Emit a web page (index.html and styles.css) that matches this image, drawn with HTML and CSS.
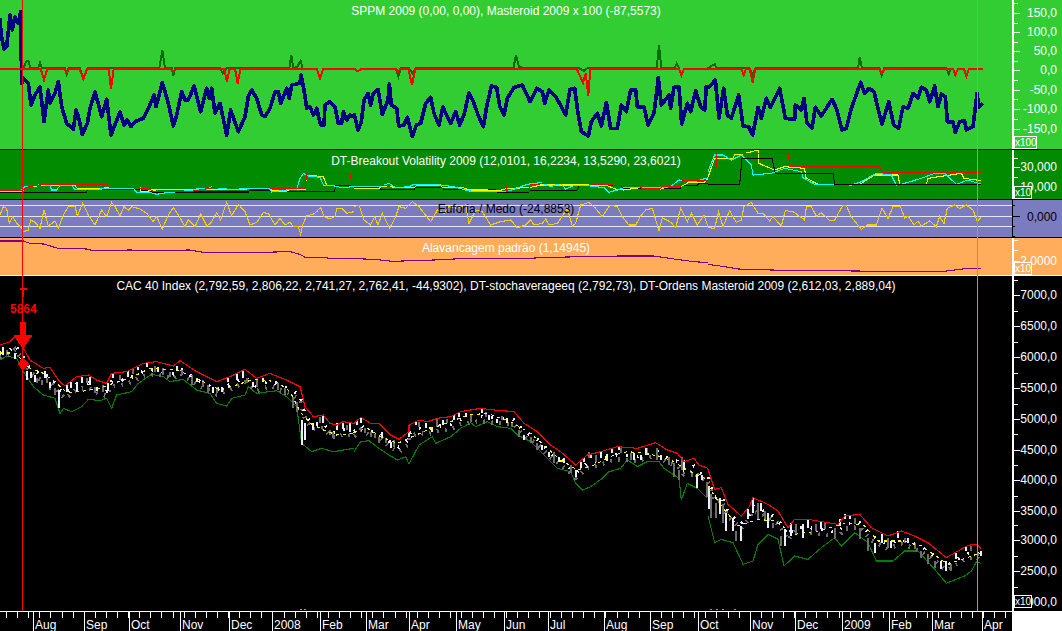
FILE: index.html
```html
<!DOCTYPE html>
<html lang="en">
<head>
    <meta charset="UTF-8">
    <title>CAC 40 Index</title>
    <link rel="stylesheet" href="styles.css">
</head>
<body>
<div class="chart">
    <div class="cursor cursor-red"></div>
    <div class="cursor cursor-orange"></div>

    <!-- SPPM / Masteroid -->
    <div class="panel panel-sppm">
        <div class="plot">
            <svg viewBox="0 0 3036 447" width="1012" height="149">
                <g>
                    <polyline class="ln-dgreen" points="70,205 78,185 85,183 92,205 114,205 120,187 126,205 195,205 200,222 205,205 240,205 250,235 262,205 478,205 487,150 495,205 515,205 520,228 525,205 660,205 668,220 680,205 868,205 874,165 880,205 892,200 902,182 908,205"/>
                    <polyline class="ln-blue" points="0,55 3,100 12,148 20,140 30,45 37,90 45,50 55,70 62,35 65,250 70,235 85,250 93,315 105,285 120,260 132,365 145,270 150,310 165,280 175,245 185,320 200,370 220,388 228,330 235,350 247,403 262,370 270,325 285,275 305,350 320,298 333,405 360,335 372,375 382,360 393,380 405,365 430,355 445,325 462,285 468,320 487,248 505,310 520,378 530,345 545,275 555,300 565,300 582,258 602,335 620,265 628,295 635,265 645,340 660,310 680,405 692,330 715,395 735,350 745,290 755,270 770,295 785,345 795,350 810,325 825,275 835,275 842,310 860,265 868,295 875,255 900,250 903,225 912,270 920,325 930,320 940,345 950,325 962,375 972,375 975,315 988,305 1005,320 1015,370 1025,370 1030,335 1040,360 1050,345 1062,350"/>
                    <polyline class="ln-red2" points="0,206 122,206 132,240 142,206 192,206 200,218 208,206 238,206 250,237 262,206 326,206 333,268 341,206 513,206 520,215 528,206 672,206 681,245 689,206 705,206 713,250 722,206 950,206 960,235 970,206 1062,206"/>
                </g>
                <g transform="translate(1062 0)">
                    <polyline class="ln-dgreen" points="125,205 133,230 140,205 165,205 175,220 185,205 478,205 486,165 495,200 510,205 675,205 690,212 700,205 908,205 915,135 922,205 962,205 968,190 975,205"/>
                    <polyline class="ln-blue" points="0,340 12,390 22,365 30,300 42,280 50,315 58,280 72,268 85,343 102,300 106,252 112,315 128,325 134,378 150,375 160,352 175,410 187,375 200,370 215,310 230,292 240,340 255,375 267,320 275,340 290,370 305,335 317,375 330,345 345,278 360,310 372,345 388,380 398,320 412,258 428,262 437,318 450,345 460,295 480,262 505,255 528,305 548,265 565,275 572,310 585,270 605,290 625,325 635,345 648,268 662,265 672,340 682,395 703,408 712,365 730,340 742,378 757,307 770,385 790,385 802,315 817,335 830,270 845,270 850,320 870,320 882,375 900,340 913,233 922,315 945,285 950,325 960,262 975,260 983,372 1000,310 1010,335 1025,272 1040,320 1052,330 1057,260 1062,265"/>
                    <polyline class="ln-red2" points="0,206 12,214 22,206 125,206 132,215 140,206 163,206 174,255 184,206 668,206 687,248 695,220 703,287 709,206 975,206 982,226 990,206 1062,206"/>
                </g>
                <g transform="translate(2124 0)">
                    <polyline class="ln-dgreen" points="0,205 10,198 20,192 26,205 125,205 134,225 142,205 450,205 455,172 462,205 515,205 521,226 528,205 715,205 722,222 730,205"/>
                    <polyline class="ln-blue" points="0,265 22,240 33,355 47,265 58,345 70,355 92,285 105,378 122,380 134,405 150,322 160,355 175,295 187,322 215,265 232,355 260,358 262,315 280,330 288,295 297,370 312,385 322,322 340,348 372,298 385,325 402,390 415,385 430,325 458,247 470,280 483,265 498,275 510,325 522,373 542,305 557,375 572,385 585,320 600,325 615,280 630,295 640,262 655,270 665,305 680,258 690,320 700,282 712,290 718,365 735,365 742,397 755,365 770,362 775,390 795,380 807,280 813,322 825,310"/>
                    <polyline class="ln-red2" points="0,206 100,206 107,225 114,206 125,206 134,247 142,206 512,206 521,220 530,206 735,206 742,225 750,206 768,206 775,230 783,206 825,206"/>
                </g>
            </svg>
            <div class="title title-sppm">SPPM 2009 (0,00, 0,00), Masteroid 2009 x 100 (-87,5573)</div>
        </div>
        <div class="axis">
            <svg viewBox="0 0 50 149" width="50" height="149">
                <path class="tick" d="M0 3H6M0 13H8M0 23H6M0 32H8M0 42H6M0 51H8M0 61H6M0 70H8M0 80H6M0 90H8M0 99H6M0 109H8M0 119H6M0 129H8M0 139H6"/>
                <text class="val" x="45" y="17">150,0</text>
                <text class="val" x="45" y="36">100,0</text>
                <text class="val" x="45" y="55">50,0</text>
                <text class="val" x="45" y="74">0,0</text>
                <text class="val" x="45" y="94">-50,0</text>
                <text class="val" x="45" y="113">-100,0</text>
                <text class="val" x="45" y="133">-150,0</text>
            </svg>
            <div class="scale scale-wide">x100</div>
        </div>
    </div>

    <!-- Breakout volatility -->
    <div class="panel panel-vol">
        <div class="plot">
            <svg viewBox="0 15 3036 147" width="1012" height="49">
                <g>
                    <polyline class="ln-black" points="0,143 258,143 265,133 420,133 425,137 450,137 455,141 745,141 750,135 808,135 812,138 1003,139 1008,122 1062,122"/>
                    <polyline class="ln-yellow" points="0,140 65,140 75,132 85,125 120,122 225,122 232,130 290,130 340,128 420,128 422,140 440,140 455,135 660,133 740,133 750,127 808,127 815,137 860,139 868,134 915,134 920,90 970,95 980,121 1005,121"/>
                    <polyline class="ln-cyan" points="65,135 75,125 100,123 125,118 150,122 155,135 170,135 180,122 215,122 225,133 285,133 340,130 400,130 410,142 450,142 470,148 485,145 575,136 590,132 620,132 635,126 660,130 700,134 740,130 808,130 815,141 860,135 890,133 900,100 910,85 925,93 960,97 970,120 1000,122 1025,128 1062,125"/>
                    <polyline class="ln-red" points="0,136 65,136 90,124 120,120 150,118 320,118 328,127 418,127 424,132 450,132 458,139 575,139 640,128 808,128 812,131 915,131 920,85 1050,85 1056,122 1062,122"/>
                </g>
                <g transform="translate(1062 0)">
                    <polyline class="ln-black" points="0,127 78,127 80,133 180,133 185,127 265,127 270,133 425,133 430,141 525,141 530,137 668,137 675,122 800,122 808,130 978,130 982,122 1030,122 1035,115 1062,115"/>
                    <polyline class="ln-yellow" points="0,130 75,130 80,125 105,122 120,128 180,128 190,120 260,120 265,127 325,127 345,135 400,135 410,138 432,138 460,130 525,128 560,120 700,120 760,122 785,132 808,135 858,128 920,132 940,125 980,125 1005,112 1050,112 1062,100"/>
                    <polyline class="ln-cyan" points="0,125 75,125 105,115 125,128 165,125 180,118 240,118 300,125 345,138 395,140 430,140 465,138 520,118 560,113 590,125 620,115 635,132 660,122 700,122 750,128 765,142 790,135 810,128 920,128 950,125 975,105 1020,110 1062,98"/>
                    <polyline class="ln-red" points="0,122 105,122 110,115 455,115 458,139 525,139 528,120 575,115 710,115 715,119 775,119 780,121 858,121 863,132 918,132 925,125 980,125 985,106 1062,106"/>
                </g>
                <g transform="translate(2124 0)">
                    <polyline class="ln-yellow" points="0,97 20,40 75,40 80,28 100,28 150,15 152,55 200,75 230,65 290,70 293,98 330,118 455,118 500,90 570,90 575,118 655,118 660,100 760,85 768,100 820,107"/>
                    <polyline class="ln-cyan" points="0,80 20,30 45,30 70,45 100,30 130,60 135,90 190,85 230,70 280,80 285,98 320,118 430,120 460,110 505,85 550,90 565,120 580,118 640,100 680,85 710,85 745,118 780,105 820,118"/>
                    <polyline class="ln-black" points="0,118 95,118 102,40 192,40 202,85 375,85 380,118 820,118"/>
                    <polyline class="ln-red" points="0,97 22,97 27,25 240,25 247,64 515,64 522,83 820,83"/>
                </g>
            </svg>
            <div class="title title-vol">DT-Breakout Volatility 2009 (12,0101, 16,2234, 13,5290, 23,6021)</div>
        </div>
        <div class="axis">
            <svg viewBox="0 0 50 49" width="50" height="49">
                <path class="tick" d="M0 8H6M0 17H8M0 27H6M0 37H8M0 47H6"/>
                <text class="val" x="45" y="21">30,000</text>
                <text class="val" x="45" y="41">10,000</text>
            </svg>
            <div class="scale">x10</div>
        </div>
    </div>

    <!-- Euforia / Medo -->
    <div class="panel panel-mood">
        <div class="plot">
            <svg viewBox="0 165 3036 111" width="1012" height="37">
                <path class="ln-band" d="M0 181H3036M0 214H3036M0 244H3036"/>
                <polyline class="ln-gold" points="0,210 10,185 20,190 28,235 38,215 50,235 65,250 70,260 85,255 92,225 105,232 120,250 132,195 145,243 165,228 175,250 190,210 205,185 225,183 232,213 248,175 265,210 285,240 305,195 320,215 335,172 345,185 360,212 372,185 385,195 395,185 420,192 440,205 460,230 470,215 487,252 505,210 520,187 535,210 555,245 565,225 585,245 602,207 620,243 632,235 650,203 662,225 680,172 695,212 715,178 735,200 750,240 770,232 790,203 805,205 825,240 840,220 855,240 870,232 880,245 895,245 902,268 908,240 920,212 940,208 950,200 962,187 972,215 990,222 1005,215 1010,192 1025,190 1040,205 1062,200"/>
                <g transform="translate(1062 0)">
                    <polyline class="ln-gold" points="0,185 15,180 30,225 50,240 62,215 72,240 85,205 107,250 125,215 135,185 155,190 175,170 195,185 230,230 250,195 270,205 285,185 310,190 335,180 345,235 365,195 385,200 410,240 440,230 470,225 490,248 515,240 530,225 540,240 565,235 575,222 585,240 610,235 640,190 655,243 665,235 680,180 705,172 725,190 745,215 768,180 790,185 805,215 825,240 845,240 860,213 875,195 895,190 915,258 925,218 950,232 965,248 980,190 1000,230 1012,205 1030,240 1050,210 1062,245"/>
                </g>
                <g transform="translate(2124 0)">
                    <polyline class="ln-gold" points="0,248 20,250 32,200 45,245 65,197 85,232 100,225 108,185 130,172 150,205 165,205 185,228 195,215 220,243 232,197 255,200 290,225 295,185 310,185 325,213 340,203 365,227 380,225 405,180 415,182 430,215 460,253 478,240 505,240 522,190 540,220 555,185 577,183 590,220 600,213 618,240 630,228 640,243 665,228 685,245 695,215 708,235 718,190 740,180 755,190 775,180 795,195 808,230 820,215"/>
                </g>
            </svg>
            <div class="title title-mood">Euforia / Medo (-24,8853)</div>
        </div>
        <div class="axis">
            <svg viewBox="0 0 50 37" width="50" height="37">
                <path class="tick tick-dark" d="M0 5H3M0 16H8M0 26H3M0 36H3"/>
                <text class="val val-dark" x="45" y="21">0,000</text>
            </svg>
        </div>
    </div>

    <!-- Alavancagem -->
    <div class="panel panel-lev">
        <div class="plot">
            <svg viewBox="0 279 3036 111" width="1012" height="37">
                <polyline class="ln-purple" points="0,288 70,288 90,295 130,297 175,310 260,312 280,317 390,315 450,317 570,315 610,322 680,323 780,322 870,320 900,328 915,337 980,337 985,341 1062,341"/>
                <polyline class="ln-purple" transform="translate(1062 0)" points="0,341 60,343 115,349 240,345 340,340 520,340 590,337 800,333 900,333 960,342 1020,350 1062,353"/>
                <polyline class="ln-purple" transform="translate(2124 0)" points="0,358 50,365 90,372 190,375 290,377 450,378 500,380 700,380 780,370 820,370"/>
            </svg>
            <div class="title title-lev">Alavancagem padrão (1,14945)</div>
        </div>
        <div class="axis">
            <svg viewBox="0 0 50 37" width="50" height="37">
                <path class="tick" d="M0 2H6M0 12H6M0 23H8M0 33H6"/>
                <text class="val" x="45" y="27">2,0000</text>
            </svg>
            <div class="scale">x10</div>
        </div>
    </div>

    <!-- CAC 40 prices -->
    <div class="panel panel-price">
        <div class="plot">
            <svg viewBox="0 0 3036 1005" width="1012" height="335">
                <defs>
                    <polyline id="hi-a" points="0,195 30,185 45,170 70,205 90,240 130,265 150,262 175,300 195,318 230,290 265,285 290,300 320,310 335,280 380,275 430,250 470,245 520,258 540,242 560,255 590,275 630,295 650,305 690,290 735,268 770,295 810,280 860,300 900,320 915,380 940,410 970,405 990,430 1010,435 1030,425 1062,430"/>
                    <polyline id="hi-b" points="0,130 20,112 50,130 75,130 110,165 135,178 165,155 165,135 195,120 220,125 250,115 290,110 320,95 350,90 380,85 420,90 480,95 510,130 550,155 590,195 620,215 665,255 700,225 740,215 790,200 850,205 905,188 940,210 970,220 990,245 1020,235 1035,255 1062,265"/>
                    <polyline id="hi-c" points="0,40 20,100 40,95 60,145 100,180 125,150 135,125 180,145 210,165 240,215 260,190 300,190 390,205 410,180 455,175 490,215 540,240 580,225 620,240 660,260 715,305 780,268 805,265 820,278"/>
                </defs>
                <g transform="translate(0 12)">
                    <polyline class="ln-green" points="0,240 20,228 50,235 70,275 100,320 130,345 165,355 180,400 190,385 215,395 245,380 265,358 300,362 320,355 335,385 350,345 395,335 415,310 455,283 490,290 510,305 550,298 590,330 630,340 650,370 680,378 695,355 735,345 745,320 770,340 830,332 860,350 890,380 905,490 935,515 965,505 1000,515 1062,505"/>
                    <use href="#hi-a" class="comb-gray" y="38"/>
                    <use href="#hi-a" class="comb-white" y="24"/>
                    <path class="bar-gray" d="M20 210V225M110 295V310M125 300V315M150 305V330M165 325V345M260 295V310M285 320V340M310 315V335M360 285V300M400 268V282M465 258V275M490 265V285M510 275V290M545 270V285M575 285V315M610 300V320M625 315V340M650 320V340M740 295V310M770 300V320M835 310V330M855 325V345M880 350V385M890 365V395M960 410V430M990 450V465M1000 455V475M1040 435V450"/>
                    <path class="bar-white" d="M10 200V225M45 222V238M80 272V300M92 275V295M105 285V305M135 272V295M150 305V325M177 330V385M200 315V335M212 305V325M230 305V332M245 290V310M270 290V315M290 320V332M325 310V332M340 280V295M385 272V290M415 260V270M440 250V262M475 260V275M530 258V270M590 295V305M640 320V340M665 320V335M685 295V305M712 280V300M730 270V295M760 305V320M790 295V305M905 420V495M915 430V480M940 430V450M970 405V430M1010 430V450M1030 430V445M1050 430V455"/>
                    <polyline class="ln-dash" points="0,218 50,220 80,260 130,280 170,310 200,338 240,335 300,325 340,310 400,290 450,265 530,270 590,295 660,330 710,315 760,298 830,305 870,335 900,395 930,430 970,450 1010,465 1062,460"/>
                    <use href="#hi-a" class="ln-red"/>
                    <path class="mark" d="M60 25H80V31H73V50H67V31H60Z"/>
                    <text class="mark-label" x="70" y="100">5864</text>
                    <path class="mark" d="M60 127H78V165H98L70 205L42 165H60Z"/>
                    <path class="mark" d="M52 252L70 232L88 252L70 272Z"/>
                </g>
                <g transform="translate(1062 312)">
                    <polyline class="ln-green" points="0,215 20,185 45,182 75,205 105,225 130,240 155,230 165,252 195,195 235,170 245,190 290,170 320,145 350,128 365,140 400,125 430,140 470,145 490,165 530,185 570,225 610,265 650,275 665,310 685,330 710,320 745,295 765,275 800,265 820,240 850,260 880,245 915,245 930,265 975,295 982,360 1000,310 1030,325 1060,355"/>
                    <use href="#hi-b" class="comb-gray" y="38"/>
                    <use href="#hi-b" class="comb-white" y="24"/>
                    <path class="bar-gray" d="M32 145V160M50 155V170M75 170V190M95 175V190M120 180V200M195 125V140M250 115V140M280 118V130M350 105V125M395 95V110M445 108V120M475 125V140M495 150V170M530 170V190M550 190V210M600 215V250M650 255V280M705 215V235M725 225V245M800 205V220M830 220V240M880 205V220M910 205V240M945 230V255M960 250V290M975 270V300M985 230V270M1015 275V290M1058 310V350"/>
                    <path class="bar-white" d="M8 120V135M20 115V130M85 155V175M110 185V205M165 135V170M185 125V135M215 128V145M235 140V155M268 120V135M300 105V120M315 95V110M335 100V110M385 88V100M405 105V120M430 118V128M460 115V130M510 165V180M565 195V210M585 215V230M615 230V245M630 235V250M665 270V290M680 245V265M690 235V245M710 225V235M740 215V235M760 222V242M775 205V220M795 198V210M840 220V240M860 225V240M875 205V225M920 225V240M990 240V270M1028 285V325M1045 285V300"/>
                    <polyline class="ln-dash" points="0,158 40,145 80,170 130,190 175,170 220,150 290,125 340,105 400,100 470,125 530,160 580,205 620,240 670,270 720,255 780,225 820,215 880,220 950,240 1000,270 1062,300"/>
                    <use href="#hi-b" class="ln-red"/>
                </g>
                <g transform="translate(2124 540)">
                    <polyline class="ln-green" points="0,180 20,260 40,250 75,260 105,325 135,315 150,265 180,235 210,250 228,330 260,300 300,310 340,275 380,245 400,270 440,230 480,260 505,315 555,315 590,285 630,285 680,340 715,382 770,360 790,345 805,318 820,322"/>
                    <use href="#hi-c" class="comb-gray" y="38"/>
                    <use href="#hi-c" class="comb-white" y="24"/>
                    <path class="bar-gray" d="M10 115V185M25 140V185M45 150V200M85 225V255M150 140V190M170 165V195M195 200V215M220 240V270M265 205V235M325 205V225M350 200V220M380 215V235M440 185V205M455 215V250M480 245V285M540 245V275M590 245V260M620 260V280M640 285V305M660 295V325M680 315V335M730 325V345M790 270V285M810 290V300"/>
                    <path class="bar-white" d="M3 90V160M35 125V175M55 170V225M75 185V225M100 210V255M120 160V190M135 125V170M160 140V165M180 170V215M230 220V270M250 200V240M285 205V245M300 190V215M340 195V220M395 190V210M410 175V190M425 180V190M500 260V290M522 235V260M550 255V275M570 225V245M600 245V260M700 315V340M715 315V345M745 290V310M775 270V285M820 285V300"/>
                    <polyline class="ln-dash" points="0,90 40,150 90,210 150,190 200,195 260,235 330,225 420,200 470,210 510,255 590,255 640,270 720,325 805,295 820,290"/>
                    <use href="#hi-c" class="ln-red"/>
                </g>
                <path class="ln-lime" d="M900 1001H906M912 1001H918M2130 1001H2136M2148 1001H2154M2166 1001H2172M2202 1001H2208"/>
            </svg>
            <div class="title title-price">CAC 40 Index (2,792,59, 2,806,22, 2,741,27, 2,762,41, -44,9302), DT-stochaverageeq (2,792,73), DT-Ordens Masteroid 2009 (2,612,03, 2,889,04)</div>
        </div>
        <div class="axis">
            <svg viewBox="0 0 50 335" width="50" height="335">
                <path class="tick" d="M0 4H6M0 19H8M0 35H6M0 50H8M0 66H6M0 81H8M0 97H6M0 112H8M0 128H6M0 143H8M0 158H6M0 174H8M0 189H6M0 204H8M0 220H6M0 235H8M0 249H6M0 264H8M0 280H6M0 295H8M0 311H6M0 326H8"/>
                <text class="val" x="45" y="23">7000,0</text>
                <text class="val" x="45" y="54">6500,0</text>
                <text class="val" x="45" y="85">6000,0</text>
                <text class="val" x="45" y="116">5500,0</text>
                <text class="val" x="45" y="147">5000,0</text>
                <text class="val" x="45" y="178">4500,0</text>
                <text class="val" x="45" y="208">4000,0</text>
                <text class="val" x="45" y="239">3500,0</text>
                <text class="val" x="45" y="268">3000,0</text>
                <text class="val" x="45" y="299">2500,0</text>
                <text class="val" x="45" y="330">2000,0</text>
            </svg>
            <div class="scale scale-price">x10</div>
        </div>
    </div>

    <!-- months -->
    <div class="timebar">
        <svg viewBox="0 0 1012 20" width="1012" height="20">
            <line class="time-line" x1="0" y1="0.5" x2="1012" y2="0.5"/>
            <line class="week-ticks" x1="0" y1="4" x2="1012" y2="4"/>
            <path class="month-lines" d="M33.5 0V20M84.5 0V20M129.5 0V20M180.5 0V20M229.5 0V20M272.5 0V20M320.5 0V20M366.5 0V20M409.5 0V20M456.5 0V20M504.5 0V20M548.5 0V20M604.5 0V20M650.5 0V20M698.5 0V20M750.5 0V20M795.5 0V20M842.5 0V20M889.5 0V20M932.5 0V20M982.5 0V20"/>
            <text class="month" x="35" y="18">Aug</text>
            <text class="month" x="86" y="18">Sep</text>
            <text class="month" x="131" y="18">Oct</text>
            <text class="month" x="182" y="18">Nov</text>
            <text class="month" x="231" y="18">Dec</text>
            <text class="month" x="274" y="18">2008</text>
            <text class="month" x="322" y="18">Feb</text>
            <text class="month" x="368" y="18">Mar</text>
            <text class="month" x="411" y="18">Apr</text>
            <text class="month" x="458" y="18">May</text>
            <text class="month" x="506" y="18">Jun</text>
            <text class="month" x="550" y="18">Jul</text>
            <text class="month" x="606" y="18">Aug</text>
            <text class="month" x="652" y="18">Sep</text>
            <text class="month" x="700" y="18">Oct</text>
            <text class="month" x="752" y="18">Nov</text>
            <text class="month" x="797" y="18">Dec</text>
            <text class="month" x="844" y="18">2009</text>
            <text class="month" x="891" y="18">Feb</text>
            <text class="month" x="934" y="18">Mar</text>
            <text class="month" x="984" y="18">Apr</text>
        </svg>
    </div>
</div>
</body>
</html>
```

FILE: styles.css
```css
body {
    margin: 0;
    font-family: "Liberation Sans", Arial, sans-serif;
    background-color: #fff;
}
svg {
    display: block;
    overflow: hidden;
}
.chart {
    position: relative;
    width: 1062px;
    height: 631px;
    overflow: hidden;
}
.cursor {
    position: absolute;
    top: 0;
    height: 611px;
    width: 1px;
    z-index: 2;
}
.cursor-red {
    left: 22px;
    background-color: #f00;
}
.cursor-orange {
    left: 977px;
    background-color: #e8803c;
}
.panel {
    display: flex;
    box-sizing: border-box;
}
.plot {
    position: relative;
    width: 1012px;
}
.axis {
    position: relative;
    width: 50px;
    box-sizing: border-box;
}
.axis svg {
    overflow: visible;
}
.panel-sppm {
    height: 150px;
    background-color: #32cd32;
    border-bottom: 1px solid #000;
}
.panel-vol {
    height: 50px;
    background-color: #008b00;
    border-bottom: 1px solid #000;
}
.panel-mood {
    height: 38px;
    background-color: #7b7bc0;
    border-bottom: 1px solid #000;
}
.panel-lev {
    height: 38px;
    background-color: #ffad5b;
    border-bottom: 1px solid #fff;
}
.panel-price {
    height: 335px;
    background-color: #000;
}
.title {
    position: absolute;
    left: 0;
    right: 0;
    text-align: center;
    font-size: 12px;
    line-height: 14px;
    color: #fff;
    white-space: nowrap;
}
.title-sppm { top: 4px; }
.title-vol { top: 4px; }
.title-mood { top: 2px; color: #000; }
.title-lev { top: 3px; }
.title-price { top: 3px; }

.scale {
    position: absolute;
    left: 2px;
    bottom: 0;
    width: 18px;
    height: 13px;
    box-sizing: border-box;
    border: 1px solid #fff;
    font-size: 10px;
    line-height: 12px;
    color: #fff;
    text-align: center;
}
.panel-sppm .scale { background-color: #32cd32; }
.panel-vol .scale { background-color: #008b00; }
.panel-lev .scale { background-color: #ffad5b; }
.panel-price .scale { background-color: #000; }
.scale-wide { width: 23px; }
.scale-price { bottom: 3px; }

.tick {
    fill: none;
    stroke: #fff;
    shape-rendering: crispEdges;
}
.tick-dark { stroke: #000; }
.val {
    font-size: 12px;
    fill: #fff;
    text-anchor: end;
}
.val-dark { fill: #000; }
.axis::before {
    content: "";
    position: absolute;
    left: 0;
    top: 0;
    bottom: 0;
    width: 2px;
    background-color: #fff;
}
.panel-mood .axis::before {
    width: 1px;
    background-color: #000;
}

polyline, use, .ln-band, .ln-lime, .bar-gray, .bar-white {
    fill: none;
    shape-rendering: crispEdges;
}
.ln-blue {
    stroke: #000080;
    stroke-width: 11;
    stroke-linejoin: round;
}
.ln-red2 {
    stroke: #f00;
    stroke-width: 6;
}
.ln-dgreen {
    stroke: #006e00;
    stroke-width: 6;
}
.ln-red { stroke: #f00; stroke-width: 3.3; }
.ln-black { stroke: #000; stroke-width: 3.3; }
.ln-yellow { stroke: #ff0; stroke-width: 3.3; }
.ln-cyan { stroke: #0ff; stroke-width: 3.3; }
.ln-gold { stroke: #f5d000; stroke-width: 3.3; }
.ln-purple { stroke: #800080; stroke-width: 3.3; }
.ln-band { stroke: #e6e6f5; stroke-width: 3.3; }
.ln-green { stroke: #008000; stroke-width: 3.3; }
.ln-dash { stroke: #ff0; stroke-width: 3.3; stroke-dasharray: 9 12; }
.ln-lime { stroke: #0f0; stroke-width: 3.3; }
.bar-gray { stroke: #6e6e6e; stroke-width: 6; }
.bar-white { stroke: #eeeeff; stroke-width: 6; }
.comb-gray {
    stroke: #6e6e6e;
    stroke-width: 13;
    stroke-dasharray: 5 19;
}
.comb-white {
    stroke: #eeeeff;
    stroke-width: 10;
    stroke-dasharray: 5 27;
}
.mark { fill: #f00; shape-rendering: crispEdges; }
.mark-label {
    font-size: 36px;
    font-weight: bold;
    fill: #f00;
    text-anchor: middle;
}

.timebar {
    width: 1062px;
    height: 20px;
    background-color: #fff;
}
.timebar svg {
    background-color: #000;
}
.time-line {
    stroke: #fff;
    shape-rendering: crispEdges;
}
.week-ticks {
    stroke: #fff;
    stroke-width: 6;
    stroke-dasharray: 1 10.1;
    stroke-dashoffset: -6;
    shape-rendering: crispEdges;
}
.month-lines {
    stroke: #fff;
    fill: none;
    shape-rendering: crispEdges;
}
.month {
    font-size: 12px;
    fill: #fff;
}
```
